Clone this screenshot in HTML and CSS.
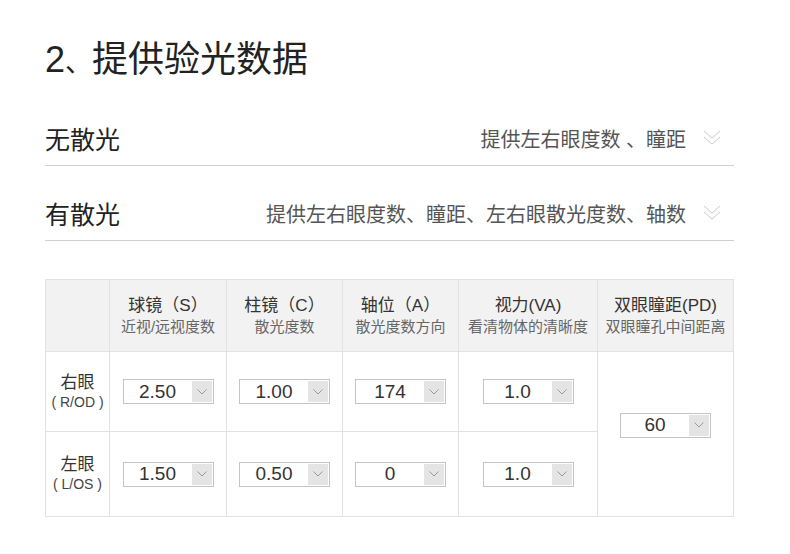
FILE: index.html
```html
<!DOCTYPE html>
<html lang="zh-CN">
<head>
    <meta charset="UTF-8">
    <meta name="viewport" content="width=device-width, initial-scale=1.0">
    <title>提供验光数据</title>
    <link rel="stylesheet" href="styles.css">
</head>
<body>
    <div class="page">
        <h1 class="title">2<span class="dun">、</span>提供验光数据</h1>

        <div class="option">
            <span class="option-name">无散光</span>
            <span class="option-desc">提供左右眼度数 、瞳距</span>
            <svg class="more" width="18" height="16" viewBox="0 0 18 16">
                <path d="M1 1 L9 8 L17 1 M1 7 L9 14 L17 7" fill="none" stroke="#c9c9c9" stroke-width="1"/>
            </svg>
        </div>

        <div class="option">
            <span class="option-name">有散光</span>
            <span class="option-desc">提供左右眼度数、瞳距、左右眼散光度数、轴数</span>
            <svg class="more" width="18" height="16" viewBox="0 0 18 16">
                <path d="M1 1 L9 8 L17 1 M1 7 L9 14 L17 7" fill="none" stroke="#c9c9c9" stroke-width="1"/>
            </svg>
        </div>

        <table class="rx">
            <colgroup>
                <col style="width: 64px">
                <col style="width: 117px">
                <col style="width: 116px">
                <col style="width: 116px">
                <col style="width: 139px">
                <col style="width: 136px">
            </colgroup>
            <tr class="head">
                <th></th>
                <th><div class="h-main">球镜（S）</div><div class="h-sub">近视/远视度数</div></th>
                <th><div class="h-main">柱镜（C）</div><div class="h-sub">散光度数</div></th>
                <th><div class="h-main">轴位（A）</div><div class="h-sub">散光度数方向</div></th>
                <th><div class="h-main">视力(VA)</div><div class="h-sub">看清物体的清晰度</div></th>
                <th><div class="h-main">双眼瞳距(PD)</div><div class="h-sub">双眼瞳孔中间距离</div></th>
            </tr>
            <tr class="row-r">
                <td class="eye"><div class="eye-name">右眼</div><div class="eye-code">( R/OD )</div></td>
                <td><div class="pick"><span class="val">2.50</span><span class="arr"><svg width="10" height="6" viewBox="0 0 10 6"><path d="M0.5 0.5 L5 5 L9.5 0.5" fill="none" stroke="#9a9a9a" stroke-width="1"/></svg></span></div></td>
                <td><div class="pick"><span class="val">1.00</span><span class="arr"><svg width="10" height="6" viewBox="0 0 10 6"><path d="M0.5 0.5 L5 5 L9.5 0.5" fill="none" stroke="#9a9a9a" stroke-width="1"/></svg></span></div></td>
                <td><div class="pick"><span class="val">174</span><span class="arr"><svg width="10" height="6" viewBox="0 0 10 6"><path d="M0.5 0.5 L5 5 L9.5 0.5" fill="none" stroke="#9a9a9a" stroke-width="1"/></svg></span></div></td>
                <td><div class="pick"><span class="val">1.0</span><span class="arr"><svg width="10" height="6" viewBox="0 0 10 6"><path d="M0.5 0.5 L5 5 L9.5 0.5" fill="none" stroke="#9a9a9a" stroke-width="1"/></svg></span></div></td>
                <td rowspan="2" class="pd"><div class="pick"><span class="val">60</span><span class="arr"><svg width="10" height="6" viewBox="0 0 10 6"><path d="M0.5 0.5 L5 5 L9.5 0.5" fill="none" stroke="#9a9a9a" stroke-width="1"/></svg></span></div></td>
            </tr>
            <tr class="row-l">
                <td class="eye"><div class="eye-name">左眼</div><div class="eye-code">( L/OS )</div></td>
                <td><div class="pick"><span class="val">1.50</span><span class="arr"><svg width="10" height="6" viewBox="0 0 10 6"><path d="M0.5 0.5 L5 5 L9.5 0.5" fill="none" stroke="#9a9a9a" stroke-width="1"/></svg></span></div></td>
                <td><div class="pick"><span class="val">0.50</span><span class="arr"><svg width="10" height="6" viewBox="0 0 10 6"><path d="M0.5 0.5 L5 5 L9.5 0.5" fill="none" stroke="#9a9a9a" stroke-width="1"/></svg></span></div></td>
                <td><div class="pick"><span class="val">0</span><span class="arr"><svg width="10" height="6" viewBox="0 0 10 6"><path d="M0.5 0.5 L5 5 L9.5 0.5" fill="none" stroke="#9a9a9a" stroke-width="1"/></svg></span></div></td>
                <td><div class="pick"><span class="val">1.0</span><span class="arr"><svg width="10" height="6" viewBox="0 0 10 6"><path d="M0.5 0.5 L5 5 L9.5 0.5" fill="none" stroke="#9a9a9a" stroke-width="1"/></svg></span></div></td>
            </tr>
        </table>
    </div>
</body>
</html>
```

FILE: styles.css
```css
body {
    margin: 0;
    background-color: #ffffff;
    font-family: "Liberation Sans", "Noto Sans CJK SC", sans-serif;
    color: #222;
}

.page {
    padding: 0 0 0 45px;
    width: 689px;
}

.title {
    margin: 38px 0 9px;
    height: 44px;
    font-size: 36px;
    line-height: 44px;
    font-weight: normal;
    color: #222;
}

.title .dun {
    font-size: 27px;
    line-height: 0;
}

/* filas de opciones */
.option {
    display: flex;
    align-items: center;
    padding: 34px 13px 14px 0;
    height: 26px;
    border-bottom: 1px solid #d0d0d0;
}

.option-name {
    font-size: 25px;
    color: #222;
}

.option-desc {
    margin-left: auto;
    font-size: 20px;
    color: #555;
}

.more {
    margin-left: 17px;
}

/* tabla de datos */
.rx {
    margin-top: 38px;
    width: 689px;
    table-layout: fixed;
    border-collapse: collapse;
    border: 1px solid #cfcfcf;
}

.rx th,
.rx td {
    border: 1px solid #e2e2e2;
    text-align: center;
    vertical-align: middle;
    padding: 0;
}

.head th {
    height: 71px;
    background-color: #f2f2f2;
    font-weight: normal;
}

.h-main {
    font-size: 17px;
    line-height: 22px;
    color: #333;
}

.h-sub {
    font-size: 15px;
    line-height: 20px;
    color: #666;
}

.row-r td {
    height: 79px;
}

.row-l td {
    height: 84px;
}

.eye-name {
    font-size: 17px;
    line-height: 21px;
    color: #333;
}

.eye-code {
    font-size: 14px;
    line-height: 19px;
    color: #444;
}

.pd {
    padding-bottom: 18px !important;
}

.pick {
    display: inline-flex;
    align-items: center;
    width: 91px;
    height: 25px;
    box-sizing: border-box;
    border: 1px solid #c4c4c4;
    background-color: #fff;
    vertical-align: middle;
}

.val {
    flex: 1;
    text-align: center;
    font-size: 19px;
    color: #333;
}

.arr {
    display: flex;
    align-items: center;
    justify-content: center;
    width: 20px;
    height: 21px;
    margin-right: 1px;
    background-color: #e4e4e4;
}
```
